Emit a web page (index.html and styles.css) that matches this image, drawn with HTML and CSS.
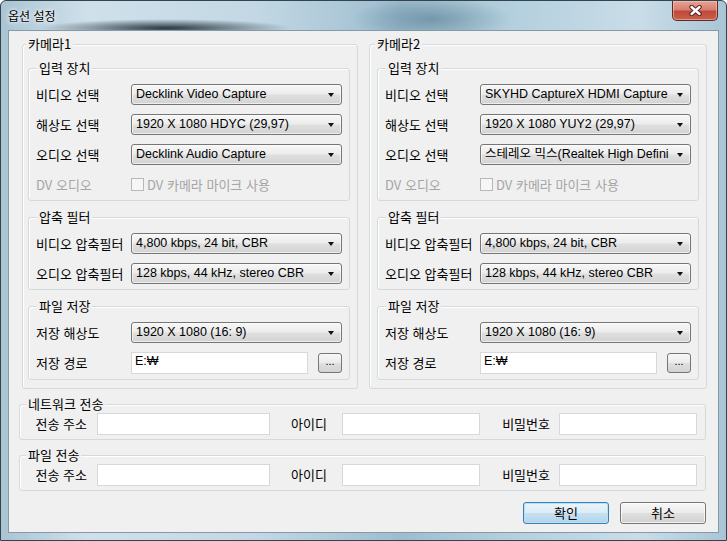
FILE: index.html
```html
<!DOCTYPE html>
<html lang="ko">

<head>
    <meta charset="UTF-8">
    <title>옵션 설정</title>
    <link rel="stylesheet" href="styles.css">
</head>

<body>
    <div class="window">
        <div class="titlebar">
            <span class="title">옵션 설정</span>
            <button class="close">
                <svg width="13" height="11" viewBox="0 0 13 11">
                    <path d="M2.5 2 L10.5 9 M10.5 2 L2.5 9" stroke="#5a2020" stroke-width="4.4" stroke-linecap="round" />
                    <path d="M2.5 2 L10.5 9 M10.5 2 L2.5 9" stroke="#ffffff" stroke-width="2.4" stroke-linecap="round" />
                </svg>
            </button>
        </div>

        <div class="client">
            <div class="cameras">

                <!-- camera 1 -->
                <fieldset class="group camera">
                    <legend>카메라1</legend>

                    <fieldset class="group sub">
                        <legend>입력 장치</legend>
                        <div class="rows">
                            <div class="row"><label>비디오 선택</label>
                                <div class="combo"><span>Decklink Video Capture</span></div>
                            </div>
                            <div class="row"><label>해상도 선택</label>
                                <div class="combo"><span>1920 X 1080 HDYC (29,97)</span></div>
                            </div>
                            <div class="row"><label>오디오 선택</label>
                                <div class="combo"><span>Decklink Audio Capture</span></div>
                            </div>
                            <div class="row disabled"><label>DV 오디오</label>
                                <label class="check"><span class="box"></span>DV 카메라 마이크 사용</label>
                            </div>
                        </div>
                    </fieldset>

                    <fieldset class="group sub">
                        <legend>압축 필터</legend>
                        <div class="rows">
                            <div class="row"><label>비디오 압축필터</label>
                                <div class="combo"><span>4,800 kbps, 24 bit, CBR</span></div>
                            </div>
                            <div class="row"><label>오디오 압축필터</label>
                                <div class="combo"><span>128 kbps, 44 kHz, stereo CBR</span></div>
                            </div>
                        </div>
                    </fieldset>

                    <fieldset class="group sub">
                        <legend>파일 저장</legend>
                        <div class="rows">
                            <div class="row"><label>저장 해상도</label>
                                <div class="combo"><span>1920 X 1080 (16: 9)</span></div>
                            </div>
                            <div class="row path"><label>저장 경로</label>
                                <div class="path-box">
                                    <div class="textbox">E:₩</div>
                                    <button class="browse">...</button>
                                </div>
                            </div>
                        </div>
                    </fieldset>
                </fieldset>

                <!-- camera 2 -->
                <fieldset class="group camera">
                    <legend>카메라2</legend>

                    <fieldset class="group sub">
                        <legend>입력 장치</legend>
                        <div class="rows">
                            <div class="row"><label>비디오 선택</label>
                                <div class="combo"><span>SKYHD CaptureX HDMI Capture</span></div>
                            </div>
                            <div class="row"><label>해상도 선택</label>
                                <div class="combo"><span>1920 X 1080 YUY2 (29,97)</span></div>
                            </div>
                            <div class="row"><label>오디오 선택</label>
                                <div class="combo"><span>스테레오 믹스(Realtek High Defini</span></div>
                            </div>
                            <div class="row disabled"><label>DV 오디오</label>
                                <label class="check"><span class="box"></span>DV 카메라 마이크 사용</label>
                            </div>
                        </div>
                    </fieldset>

                    <fieldset class="group sub">
                        <legend>압축 필터</legend>
                        <div class="rows">
                            <div class="row"><label>비디오 압축필터</label>
                                <div class="combo"><span>4,800 kbps, 24 bit, CBR</span></div>
                            </div>
                            <div class="row"><label>오디오 압축필터</label>
                                <div class="combo"><span>128 kbps, 44 kHz, stereo CBR</span></div>
                            </div>
                        </div>
                    </fieldset>

                    <fieldset class="group sub">
                        <legend>파일 저장</legend>
                        <div class="rows">
                            <div class="row"><label>저장 해상도</label>
                                <div class="combo"><span>1920 X 1080 (16: 9)</span></div>
                            </div>
                            <div class="row path"><label>저장 경로</label>
                                <div class="path-box">
                                    <div class="textbox">E:₩</div>
                                    <button class="browse">...</button>
                                </div>
                            </div>
                        </div>
                    </fieldset>
                </fieldset>
            </div>

            <!-- transfer settings -->
            <fieldset class="group transfer">
                <legend>네트워크 전송</legend>
                <div class="transfer-row">
                    <label class="l1">전송 주소</label>
                    <div class="textbox"></div>
                    <label class="l2">아이디</label>
                    <div class="textbox"></div>
                    <label class="l3">비밀번호</label>
                    <div class="textbox"></div>
                </div>
            </fieldset>

            <fieldset class="group transfer file">
                <legend>파일 전송</legend>
                <div class="transfer-row">
                    <label class="l1">전송 주소</label>
                    <div class="textbox"></div>
                    <label class="l2">아이디</label>
                    <div class="textbox"></div>
                    <label class="l3">비밀번호</label>
                    <div class="textbox"></div>
                </div>
            </fieldset>

            <div class="buttons">
                <button class="btn default">확인</button>
                <button class="btn">취소</button>
            </div>
        </div>
    </div>
</body>

</html>
```

FILE: styles.css
```css
/* dialog window */
body {
    margin: 0;
    font-family: "Liberation Sans", "Noto Sans CJK KR", sans-serif;
    font-size: 13px;
    color: #000;
    background: #fff;
}

.window {
    width: 727px;
    height: 541px;
    box-sizing: border-box;
    border: 1px solid #34444f;
    border-radius: 6px 6px 0 0;
    padding: 0 7px 7px;
    display: flex;
    flex-direction: column;
    background:
        radial-gradient(ellipse 125px 9px at 165px 27px, rgba(25, 40, 50, 0.9), rgba(25, 40, 50, 0)),
        radial-gradient(ellipse 80px 22px at 430px 18px, rgba(60, 100, 120, 0.45), rgba(60, 100, 120, 0)),
        linear-gradient(90deg, #aac4d4 0%, #cfe0ea 12%, #c3d8e4 35%, #9dbdcf 55%, #b3cfdd 70%, #c9dde8 88%, #a9c5d5 100%);
}

.titlebar {
    height: 29px;
    display: flex;
    justify-content: space-between;
    align-items: flex-start;
}

.title {
    font-family: "Noto Sans CJK KR", sans-serif;
    font-size: 12px;
    line-height: 14px;
    margin-top: 8px;
    text-shadow: 0 0 6px #fff, 0 0 3px #fff;
}

.close {
    width: 46px;
    height: 20px;
    margin: 0 1px 0 0;
    padding: 0;
    border: 1px solid #5e2a26;
    border-top: none;
    border-radius: 0 0 5px 5px;
    background: linear-gradient(#e6a393 0%, #d88070 45%, #c04a3a 55%, #c8604c 100%);
    box-shadow: inset 0 0 0 1px rgba(255, 210, 200, 0.5);
    display: flex;
    align-items: center;
    justify-content: center;
}

.client {
    flex: 1;
    background: #f0f0f0;
    border: 1px solid #8599a6;
    padding: 6px 12px 0 10px;
    display: flex;
    flex-direction: column;
}

/* group boxes */
.group {
    margin: 0;
    border: 1px solid #d3d9dd;
    border-radius: 3px;
    box-shadow: inset 1px 1px 0 #fff;
    min-width: 0;
}

.group legend {
    font-family: "Noto Sans CJK KR", sans-serif;
    font-size: 13px;
    line-height: 14px;
    padding: 0 2px;
    background: #f0f0f0;
}

.cameras {
    display: grid;
    grid-template-columns: 336px 338px;
    column-gap: 11px;
    margin-left: 3px;
}

.camera {
    padding: 10px 7px 8px 5px;
}

.camera legend {
    margin-left: -2px;
}

.camera + .camera {
    padding-left: 7px;
}

.sub {
    padding: 9px 7px 5px 7px;
}

.sub legend {
    margin-left: 1px;
}

.sub + .sub {
    margin-top: 9px;
}

.rows {
    display: flex;
    flex-direction: column;
    gap: 9px;
}

.row {
    display: grid;
    grid-template-columns: 95px minmax(0, 1fr);
    align-items: center;
    height: 21px;
}

.row label {
    font-family: "Noto Sans CJK KR", sans-serif;
    white-space: nowrap;
    line-height: 14px;
}

.row.path {
    height: 22px;
}

.row.disabled label {
    color: #a5a5a5;
}

/* combo box */
.combo {
    min-width: 0;
    height: 21px;
    box-sizing: border-box;
    border: 1px solid #767676;
    border-radius: 3px;
    background: linear-gradient(#f7f7f7 0%, #ececec 48%, #dfdfdf 52%, #d3d3d3 100%);
    box-shadow: inset 0 0 0 1px rgba(255, 255, 255, 0.6);
    display: flex;
    align-items: center;
    padding: 0 7px 0 4px;
    font-size: 12.5px;
}

.combo span {
    flex: 1;
    min-width: 0;
    white-space: nowrap;
    margin-right: 5px;
    line-height: 15px;
}

.combo::after {
    content: "";
    flex: none;
    border-left: 3.5px solid transparent;
    border-right: 3.5px solid transparent;
    border-top: 4px solid #111;
}

/* checkbox */
.check {
    display: flex;
    align-items: center;
    gap: 3px;
}

.check .box {
    width: 11px;
    height: 11px;
    border: 1px solid #b8b8b8;
    background: #f6f6f6;
}

/* text boxes */
.textbox {
    height: 22px;
    box-sizing: border-box;
    background: #fff;
    border: 1px solid #d5d9dd;
    font-size: 12.5px;
    line-height: 15px;
    padding: 1px 3px;
}

.path-box {
    min-width: 0;
    display: flex;
    align-items: center;
    gap: 10px;
}

.path-box .textbox {
    flex: 1;
}

.browse {
    width: 24px;
    height: 20px;
    padding: 0 0 4px;
    border: 1px solid #767676;
    border-radius: 3px;
    background: linear-gradient(#f7f7f7 0%, #ececec 48%, #dfdfdf 52%, #d3d3d3 100%);
    font-family: "Liberation Sans", sans-serif;
    font-size: 11px;
    line-height: 12px;
}

/* transfer groups */
.transfer {
    margin-top: 8px;
    padding: 2px 8px 4px 0;
}

.transfer legend {
    margin-left: 6px;
}

.transfer.file {
    margin-top: 8px;
}

.transfer-row {
    display: grid;
    grid-template-columns: 77px 173px 72px 138px 79px 138px;
    align-items: center;
}

.transfer-row label {
    font-family: "Noto Sans CJK KR", sans-serif;
    text-align: right;
    white-space: nowrap;
    line-height: 14px;
}

.transfer-row .l1 {
    padding-right: 10px;
}

.transfer-row .l2 {
    padding-right: 15px;
}

.transfer-row .l3 {
    padding-right: 9px;
}

/* dialog buttons */
.buttons {
    display: flex;
    justify-content: flex-end;
    gap: 11px;
    margin-top: 11px;
}

.btn {
    width: 86px;
    height: 22px;
    border: 1px solid #767676;
    border-radius: 3px;
    background: linear-gradient(#f7f7f7 0%, #ececec 48%, #dfdfdf 52%, #d1d1d1 100%);
    box-shadow: inset 0 0 0 1px rgba(255, 255, 255, 0.7);
    font-family: "Noto Sans CJK KR", sans-serif;
    font-size: 13px;
    line-height: 14px;
    padding: 0;
}

.btn.default {
    border-color: #3c7fb1;
    background: linear-gradient(#eaf4fa 0%, #dcecf6 48%, #c6e0f0 52%, #b4d4ea 100%);
    box-shadow: inset 0 0 0 1px #b6e1fb;
}
```
